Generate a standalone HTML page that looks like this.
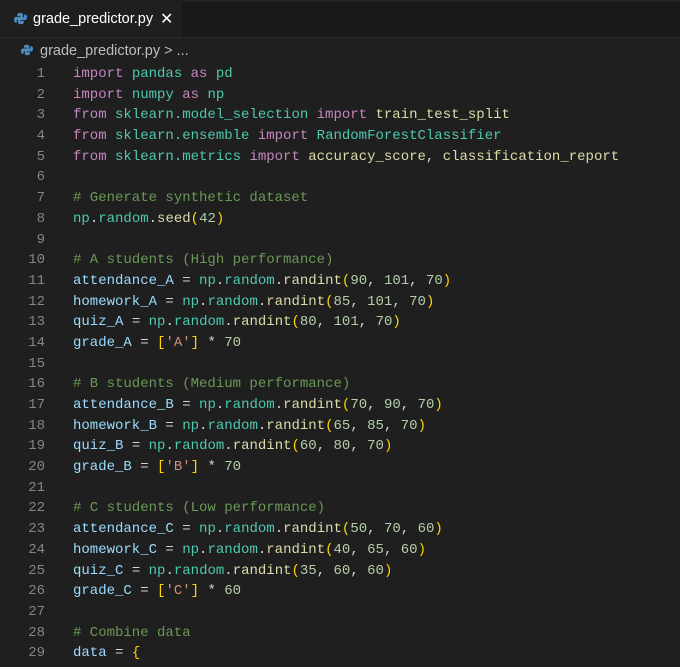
<!DOCTYPE html>
<html><head><meta charset="utf-8"><style>
*{margin:0;padding:0;box-sizing:border-box}
body{width:680px;height:667px;background:#1f1f1f;overflow:hidden;font-family:"Liberation Sans",sans-serif;position:relative}
.tabbar{position:absolute;left:0;top:0;width:680px;height:38px;background:#191919;border-top:2px solid #222;border-bottom:1px solid #2b2b2b}
.tab{position:absolute;left:0;top:-2px;width:182px;height:39px;background:#1f1f1f;border-top:2px solid #0078d4;color:#fff;font-size:14.5px}
.tab span{position:absolute;left:33px;top:11px}
.tab .x{position:absolute;left:160px;top:9px;font-size:16px}
.crumb{position:absolute;left:40px;top:43px;color:#bdbdbd;font-size:14.5px}
.ico{position:absolute}
.code{position:absolute;left:0;top:64px;font-family:"Liberation Mono",monospace;font-size:14px;line-height:20.68px;color:#d4d4d4}
.ln{position:absolute;left:0;width:45px;text-align:right;color:#858585;white-space:pre}
.tx{position:absolute;left:73px;white-space:pre;width:620px}
.k{color:#c586c0}.m{color:#4ec9b0}.v{color:#9cdcfe}.f{color:#dcdcaa}.n{color:#b5cea8}.c{color:#6a9955}.s{color:#ce9178}.b{color:#ffd700}
</style></head><body>
<div class="tabbar"></div>
<div class="tab">
<svg class="ico" style="left:14px;top:12px" width="13" height="13" viewBox="0 0 16 16"><path d="M8 1C4 1 4 3 4 3v2h4v1H2.5S0 6 0 9.5 2 13 2 13h1.5v-2S3.5 9 5.5 9h4S11 9 11 7.5V3S11 1 8 1z" fill="#4d8bc0"/><path d="M8 15c4 0 4-2 4-2v-2H8v-1h5.5S16 10 16 6.5 14 3 14 3h-1.5v2s0 2-2 2h-4S5 7 5 8.5V13s0 2 3 2z" fill="#4d8bc0"/></svg>
<span>grade_predictor.py</span><span class="x">✕</span></div>
<svg class="ico" style="left:21px;top:44px" width="12" height="12" viewBox="0 0 16 16"><path d="M8 1C4 1 4 3 4 3v2h4v1H2.5S0 6 0 9.5 2 13 2 13h1.5v-2S3.5 9 5.5 9h4S11 9 11 7.5V3S11 1 8 1z" fill="#4d8bc0"/><path d="M8 15c4 0 4-2 4-2v-2H8v-1h5.5S16 10 16 6.5 14 3 14 3h-1.5v2s0 2-2 2h-4S5 7 5 8.5V13s0 2 3 2z" fill="#4d8bc0"/></svg>
<div class="crumb">grade_predictor.py &gt; ...</div>
<div class="code"><div class="ln">1
2
3
4
5
6
7
8
9
10
11
12
13
14
15
16
17
18
19
20
21
22
23
24
25
26
27
28
29</div><div class="tx"><span class="k">import</span> <span class="m">pandas</span> <span class="k">as</span> <span class="m">pd</span>
<span class="k">import</span> <span class="m">numpy</span> <span class="k">as</span> <span class="m">np</span>
<span class="k">from</span> <span class="m">sklearn.model_selection</span> <span class="k">import</span> <span class="f">train_test_split</span>
<span class="k">from</span> <span class="m">sklearn.ensemble</span> <span class="k">import</span> <span class="m">RandomForestClassifier</span>
<span class="k">from</span> <span class="m">sklearn.metrics</span> <span class="k">import</span> <span class="f">accuracy_score</span>, <span class="f">classification_report</span>

<span class="c"># Generate synthetic dataset</span>
<span class="m">np</span>.<span class="m">random</span>.<span class="f">seed</span><span class="b">(</span><span class="n">42</span><span class="b">)</span>

<span class="c"># A students (High performance)</span>
<span class="v">attendance_A</span> = <span class="m">np</span>.<span class="m">random</span>.<span class="f">randint</span><span class="b">(</span><span class="n">90</span>, <span class="n">101</span>, <span class="n">70</span><span class="b">)</span>
<span class="v">homework_A</span> = <span class="m">np</span>.<span class="m">random</span>.<span class="f">randint</span><span class="b">(</span><span class="n">85</span>, <span class="n">101</span>, <span class="n">70</span><span class="b">)</span>
<span class="v">quiz_A</span> = <span class="m">np</span>.<span class="m">random</span>.<span class="f">randint</span><span class="b">(</span><span class="n">80</span>, <span class="n">101</span>, <span class="n">70</span><span class="b">)</span>
<span class="v">grade_A</span> = <span class="b">[</span><span class="s">'A'</span><span class="b">]</span> * <span class="n">70</span>

<span class="c"># B students (Medium performance)</span>
<span class="v">attendance_B</span> = <span class="m">np</span>.<span class="m">random</span>.<span class="f">randint</span><span class="b">(</span><span class="n">70</span>, <span class="n">90</span>, <span class="n">70</span><span class="b">)</span>
<span class="v">homework_B</span> = <span class="m">np</span>.<span class="m">random</span>.<span class="f">randint</span><span class="b">(</span><span class="n">65</span>, <span class="n">85</span>, <span class="n">70</span><span class="b">)</span>
<span class="v">quiz_B</span> = <span class="m">np</span>.<span class="m">random</span>.<span class="f">randint</span><span class="b">(</span><span class="n">60</span>, <span class="n">80</span>, <span class="n">70</span><span class="b">)</span>
<span class="v">grade_B</span> = <span class="b">[</span><span class="s">'B'</span><span class="b">]</span> * <span class="n">70</span>

<span class="c"># C students (Low performance)</span>
<span class="v">attendance_C</span> = <span class="m">np</span>.<span class="m">random</span>.<span class="f">randint</span><span class="b">(</span><span class="n">50</span>, <span class="n">70</span>, <span class="n">60</span><span class="b">)</span>
<span class="v">homework_C</span> = <span class="m">np</span>.<span class="m">random</span>.<span class="f">randint</span><span class="b">(</span><span class="n">40</span>, <span class="n">65</span>, <span class="n">60</span><span class="b">)</span>
<span class="v">quiz_C</span> = <span class="m">np</span>.<span class="m">random</span>.<span class="f">randint</span><span class="b">(</span><span class="n">35</span>, <span class="n">60</span>, <span class="n">60</span><span class="b">)</span>
<span class="v">grade_C</span> = <span class="b">[</span><span class="s">'C'</span><span class="b">]</span> * <span class="n">60</span>

<span class="c"># Combine data</span>
<span class="v">data</span> = <span class="b">{</span></div></div>
</body></html>
